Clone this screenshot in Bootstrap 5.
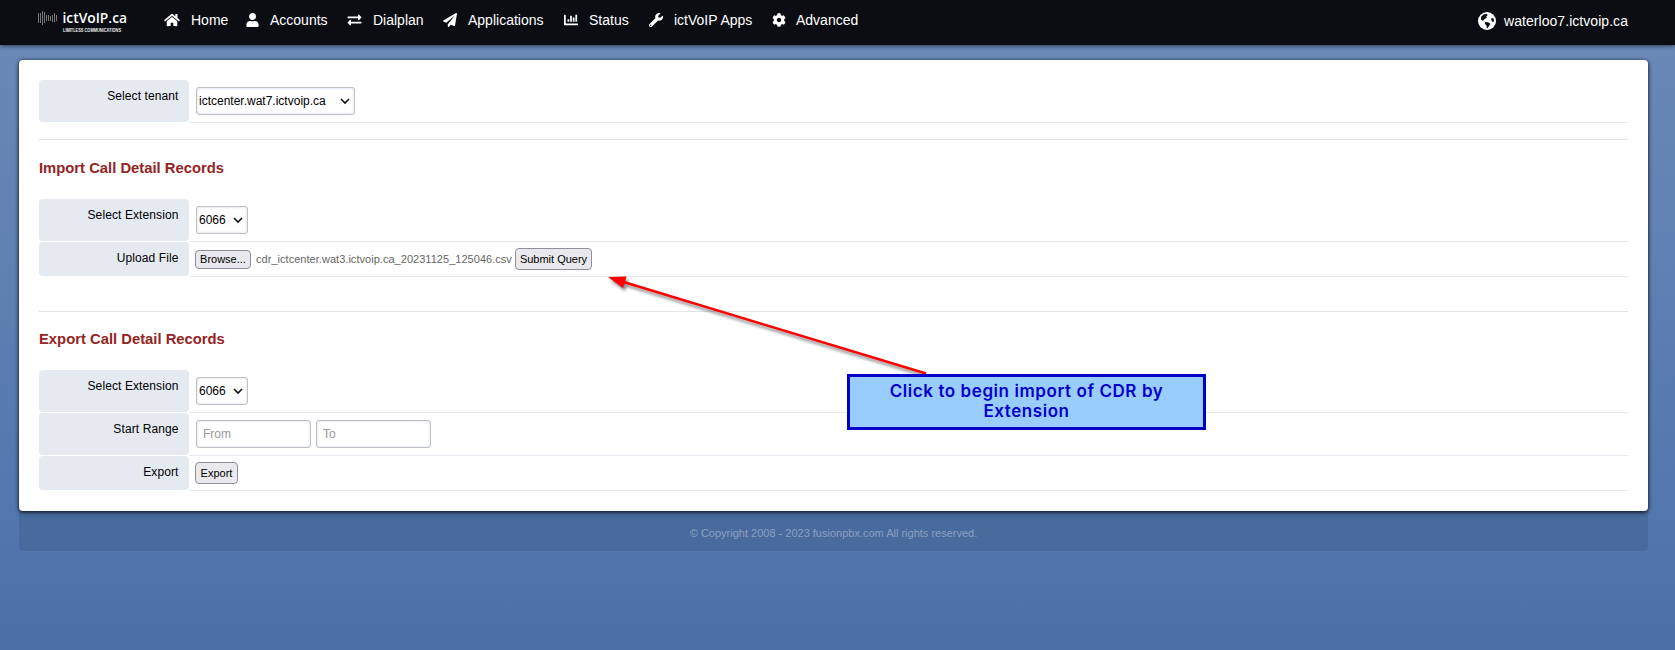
<!DOCTYPE html>
<html lang="en">
<head>
<meta charset="utf-8">
<title>Call Detail Records</title>
<link href="https://cdn.jsdelivr.net/npm/bootstrap@5.3.0/dist/css/bootstrap.min.css" rel="stylesheet">
<style>
body{font-family:"Liberation Sans",Arial,sans-serif;font-size:12px;line-height:14px;color:#000;height:650px;overflow:hidden;background:linear-gradient(#6c8ab7 0,#5176ae 540px,#4b70a8 650px)}
.topbar{height:45px;padding:0;background:#0b0d12;box-shadow:0 0 5px #000c;font-size:14px;line-height:16px;color:#fff}
.brand-logo{margin-left:36px;width:96px}
.menu{padding-top:1px}
.menu .nav-link{color:#fff;padding:0;height:38px;white-space:nowrap}
.menu svg{height:14px;fill:#fff;flex:none}
.domain{margin-right:47px;gap:8px;color:#fff;letter-spacing:.05px}
.panel{margin:15px 27px 0 19px;height:451px;padding:20px;background:#fff;border-radius:4px;box-shadow:0 1px 4px #000;position:relative}
.field-row{height:43px}
.field-row.short{height:35px}
.field-label{width:150px;flex:none;margin-bottom:1px;padding:9px 10.5px 0 0;background:#e5e9f0;border-radius:4px;text-align:right;letter-spacing:.1px}
.field-value{border-bottom:1px solid #e5e9f0;padding:0 7px;flex:1}
.rule{height:1px;background:#e0e3e7}
h2{font-size:14.8px;line-height:16px;font-weight:700;color:#952424;margin:0}
.pick,.field-value input{height:28px;border:1px solid #c0c0c0;border-radius:3px;background:#fff;box-shadow:inset 0 0 3px #cddaf0;font-size:12px;padding:0 2px;color:#000}
.field-value input{width:115px;padding:0 6px}
.field-value input::placeholder{color:#999;opacity:1}
.push{border:1px solid #8f8f9d;border-radius:4px;background:#e9e9ed;font-size:11px;line-height:13px;color:#000;padding:0;text-align:center;white-space:nowrap}
.copyright{margin:0 27px 0 19px;height:40px;background:#0000001a;border-radius:0 0 4px 4px;font-size:11px;color:#8ba0c3;padding-top:15px}
.pointer{position:absolute;left:581px;top:205px}
.callout{position:absolute;left:828px;top:314px;width:359px;height:56px;border:3px solid #0000c8;background:#99ccff;color:#0000c8;font:600 17px/20px Inter,sans-serif;letter-spacing:.57px;text-align:center;padding-top:4px}
</style>
</head>
<body>
<nav class="topbar d-flex position-relative">
 <svg class="brand-logo" height="40" viewBox="36 0 96 40">
  <g stroke="#777" stroke-width="1"><path d="M38.5 13v10M40.500 13v10M42.500 11v14M44.500 12v11M46.500 15v6M48.500 15v6M50.500 16v5M52.500 15v7M54.500 13v9M56.500 15v6"/></g>
  <text x="62.500" y="23" fill="#fff" font-family="Open Sans" font-weight="600" font-size="13.500" textLength="64.500" lengthAdjust="spacingAndGlyphs">ictVoIP.ca</text>
  <text x="63" y="32" fill="#eee" font-family="Liberation Sans" font-weight="700" font-size="4.500" textLength="58" lengthAdjust="spacingAndGlyphs">LIMITLESS COMMUNICATIONS</text>
 </svg>
 <div class="menu nav flex-nowrap flex-grow-1 position-relative" style="margin-left:32px">
  <a class="nav-link d-flex align-items-center" style="width:82px"><svg viewBox="0 0 576 512" width="16"><path d="M280.37 148.26L96 300.11V464a16 16 0 0 0 16 16l112.06-.29a16 16 0 0 0 15.92-16V368a16 16 0 0 1 16-16h64a16 16 0 0 1 16 16v95.64a16 16 0 0 0 16 16.05L464 480a16 16 0 0 0 16-16V300L295.67 148.26a12.19 12.19 0 0 0-15.3 0zM571.6 251.47L488 182.56V44.05a12 12 0 0 0-12-12h-56a12 12 0 0 0-12 12v72.61L318.47 43a48 48 0 0 0-61 0L4.34 251.47a12 12 0 0 0-1.6 16.9l25.5 31A12 12 0 0 0 45.15 301l235.22-193.74a12.19 12.19 0 0 1 15.3 0L530.9 301a12 12 0 0 0 16.9-1.6l25.5-31a12 12 0 0 0-1.7-16.93z"/></svg><span style="margin-left:11px">Home</span></a>
  <a class="nav-link d-flex align-items-center" style="width:101px"><svg viewBox="0 0 448 512" width="13"><path d="M224 256c70.7 0 128-57.3 128-128S294.7 0 224 0 96 57.3 96 128s57.3 128 128 128zm89.6 32h-16.7c-22.2 10.2-46.9 16-72.9 16s-50.6-5.8-72.9-16h-16.7C60.2 288 0 348.2 0 422.4V464c0 26.500 21.500 48 48 48h352c26.500 0 48-21.500 48-48v-41.600c0-74.200-60.200-134.400-134.400-134.400z"/></svg><span style="margin-left:11px">Accounts</span></a>
  <a class="nav-link d-flex align-items-center" style="width:96px"><svg viewBox="0 0 512 512" width="15"><path d="M0 168v-16c0-13.255 10.745-24 24-24h360V80c0-21.367 25.899-32.042 40.971-16.971l80 80c9.372 9.373 9.372 24.569 0 33.941l-80 80C409.956 271.982 384 261.456 384 240v-48H24c-13.255 0-24-10.745-24-24zm488 152H128v-48c0-21.314-25.862-32.080-40.971-16.971l-80 80c-9.372 9.373-9.372 24.569 0 33.941l80 80C102.057 463.997 128 453.437 128 432v-48h360c13.255 0 24-10.745 24-24v-16c0-13.255-10.745-24-24-24z"/></svg><span style="margin-left:11px">Dialplan</span></a>
  <a class="nav-link d-flex align-items-center" style="width:121px"><svg viewBox="0 0 512 512" width="14"><path d="M476 3.200L12.500 270.600c-18.100 10.400-15.800 35.600 2.200 43.200L121 358.400l287.300-253.200c5.500-4.900 13.300 2.600 8.600 8.300L176 407v80.500c0 23.600 28.500 32.900 42.500 15.800L282 426l124.600 52.200c14.200 6 30.400-2.900 33-18.200l72-432C515 7.800 493.300-6.800 476 3.200z"/></svg><span style="margin-left:11px">Applications</span></a>
  <a class="nav-link d-flex align-items-center" style="width:85px"><svg viewBox="0 0 512 512" width="14"><path d="M332.800 320h38.400c6.400 0 12.800-6.400 12.800-12.800V172.800c0-6.400-6.400-12.800-12.800-12.800h-38.400c-6.400 0-12.800 6.400-12.800 12.800v134.400c0 6.400 6.400 12.800 12.800 12.800zm96 0h38.400c6.400 0 12.800-6.400 12.800-12.800V76.800c0-6.400-6.400-12.800-12.800-12.800h-38.400c-6.400 0-12.800 6.400-12.800 12.800v230.400c0 6.400 6.400 12.800 12.800 12.800zm-288 0h38.400c6.400 0 12.800-6.400 12.800-12.800v-70.400c0-6.400-6.400-12.800-12.800-12.800h-38.400c-6.400 0-12.800 6.400-12.800 12.800v70.400c0 6.400 6.400 12.800 12.800 12.800zm96 0h38.400c6.400 0 12.800-6.400 12.800-12.800V108.800c0-6.400-6.400-12.800-12.800-12.800h-38.400c-6.400 0-12.800 6.400-12.800 12.800v198.400c0 6.400 6.400 12.800 12.800 12.800zM496 384H64V80c0-8.840-7.160-16-16-16H16C7.160 64 0 71.160 0 80v336c0 17.670 14.330 32 32 32h464c8.840 0 16-7.160 16-16v-32c0-8.840-7.160-16-16-16z"/></svg><span style="margin-left:11px">Status</span></a>
  <a class="nav-link d-flex align-items-center" style="width:123px"><svg viewBox="0 0 512 512" width="14"><path d="M507.730 109.100c-2.240-9.030-13.540-12.090-20.120-5.510l-74.360 74.360-67.880-11.310-11.310-67.880 74.360-74.360c6.620-6.620 3.430-17.900-5.660-20.160-47.380-11.740-99.550.91-136.580 37.930-39.640 39.640-50.550 97.100-34.050 147.200L18.740 402.760c-24.990 24.990-24.990 65.510 0 90.500 24.990 24.990 65.510 24.990 90.500 0l213.210-213.210c50.120 16.710 107.470 5.680 147.370-34.220 37.070-37.070 49.700-89.320 37.910-136.730zM64 472c-13.250 0-24-10.750-24-24 0-13.260 10.750-24 24-24s24 10.740 24 24c0 13.250-10.750 24-24 24z"/></svg><span style="margin-left:11px">ictVoIP Apps</span></a>
  <a class="nav-link d-flex align-items-center"><svg viewBox="0 0 512 512" width="14"><path d="M487.400 315.700l-42.600-24.600c4.300-23.200 4.300-47 0-70.200l42.600-24.600c4.900-2.800 7.100-8.600 5.500-14-11.100-35.600-30-67.800-54.700-94.600-3.800-4.100-10-5.100-14.800-2.300L380.800 110c-17.900-15.400-38.500-27.300-60.800-35.100V25.800c0-5.600-3.900-10.500-9.400-11.700-36.700-8.200-74.300-7.800-109.200 0-5.500 1.200-9.400 6.100-9.400 11.700V75c-22.200 7.900-42.800 19.800-60.800 35.100L88.700 85.500c-4.900-2.800-11-1.900-14.800 2.300-24.700 26.700-43.600 58.900-54.700 94.600-1.700 5.400.6 11.200 5.500 14L67.300 221c-4.300 23.200-4.300 47 0 70.200l-42.600 24.600c-4.900 2.800-7.100 8.600-5.500 14 11.100 35.600 30 67.800 54.700 94.600 3.800 4.100 10 5.100 14.800 2.300l42.600-24.600c17.900 15.400 38.500 27.300 60.800 35.100v49.200c0 5.600 3.900 10.500 9.400 11.700 36.700 8.200 74.300 7.800 109.200 0 5.500-1.200 9.400-6.100 9.400-11.700v-49.200c22.200-7.900 42.800-19.800 60.800-35.100l42.600 24.600c4.900 2.800 11 1.900 14.800-2.300 24.700-26.700 43.600-58.900 54.700-94.600 1.500-5.500-.7-11.300-5.600-14.100zM256 336c-44.100 0-80-35.900-80-80s35.900-80 80-80 80 35.900 80 80-35.900 80-80 80z"/></svg><span style="margin-left:10px">Advanced</span></a>
 </div>
 <div class="domain d-flex align-items-center" style="height:41px">
  <svg width="18" height="18" viewBox="0 0 18 18"><circle cx="9" cy="9" r="9" fill="#fff"/><path fill="#0b0d12" d="M3.200 4.500L5.500 2.500 9 1.700 9.500 3.500 8.200 4.300 9 5.500 7.200 6.500 6 7.700 4.700 8 6.500 9.500 5 9 3 7.500zM7 10L10 10.200 12.500 11.700 11 14 9.500 16.300 8.700 15.800 8.500 13.500 7 12zM13 6.500L15.300 6 16 8.500 15.500 10 13.800 9.500z"/></svg>
  <span>waterloo7.ictvoip.ca</span>
 </div>
</nav>
<main class="panel">
 <div class="field-row d-flex"><label class="field-label">Select tenant</label><div class="field-value d-flex align-items-center"><div class="pick d-flex align-items-center justify-content-between" style="width:159px"><span>ictcenter.wat7.ictvoip.ca</span><svg width="14" height="8" viewBox="0 0 14 8"><path d="M3 2l4 4 4-4" fill="none" stroke="#111" stroke-width="1.600"/></svg></div></div></div>
 <div class="rule" style="margin-top:16px"></div>
 <h2 style="margin:20px 0 23px">Import Call Detail Records</h2>
 <div class="field-row d-flex"><label class="field-label">Select Extension</label><div class="field-value d-flex align-items-center"><div class="pick d-flex align-items-center justify-content-between" style="width:52px"><span>6066</span><svg width="14" height="8" viewBox="0 0 14 8"><path d="M3 2l4 4 4-4" fill="none" stroke="#111" stroke-width="1.600"/></svg></div></div></div>
 <div class="field-row short d-flex"><label class="field-label">Upload File</label><div class="field-value d-flex align-items-center" style="padding-left:6px"><button class="push" style="width:56px;height:19px">Browse...</button><span class="file-name" style="margin-left:5px;width:259px;font-size:11px;letter-spacing:.035px;color:#666;white-space:nowrap">cdr_ictcenter.wat3.ictvoip.ca_20231125_125046.csv</span><button class="push" style="width:77px;height:22px">Submit Query</button></div></div>
 <div class="rule" style="margin-top:34px"></div>
 <h2 style="margin:19px 0 23px">Export Call Detail Records</h2>
 <div class="field-row d-flex"><label class="field-label">Select Extension</label><div class="field-value d-flex align-items-center"><div class="pick d-flex align-items-center justify-content-between" style="width:52px"><span>6066</span><svg width="14" height="8" viewBox="0 0 14 8"><path d="M3 2l4 4 4-4" fill="none" stroke="#111" stroke-width="1.600"/></svg></div></div></div>
 <div class="field-row d-flex"><label class="field-label">Start Range</label><div class="field-value d-flex align-items-center" style="gap:5px"><input placeholder="From"><input placeholder="To"></div></div>
 <div class="field-row short d-flex"><label class="field-label">Export</label><div class="field-value d-flex align-items-center" style="padding-left:6px"><button class="push" style="width:43px;height:22px">Export</button></div></div>
 <svg class="pointer" width="340" height="120" viewBox="600 265 340 120" style="filter:drop-shadow(2px 3px 1.500px #0007)"><path d="M622 281.500L926 373.500" stroke="#f00" stroke-width="2.500"/><path d="M608 277l18.500-.5-3.500 11.500z" fill="#f00"/></svg>
 <div class="callout">Click to begin import of CDR by<br>Extension</div>
</main>
<footer class="copyright text-center">© Copyright 2008 - 2023 fusionpbx.com All rights reserved.</footer>
<script src="https://cdn.jsdelivr.net/npm/bootstrap@5.3.0/dist/js/bootstrap.bundle.min.js"></script>
</body>
</html>
